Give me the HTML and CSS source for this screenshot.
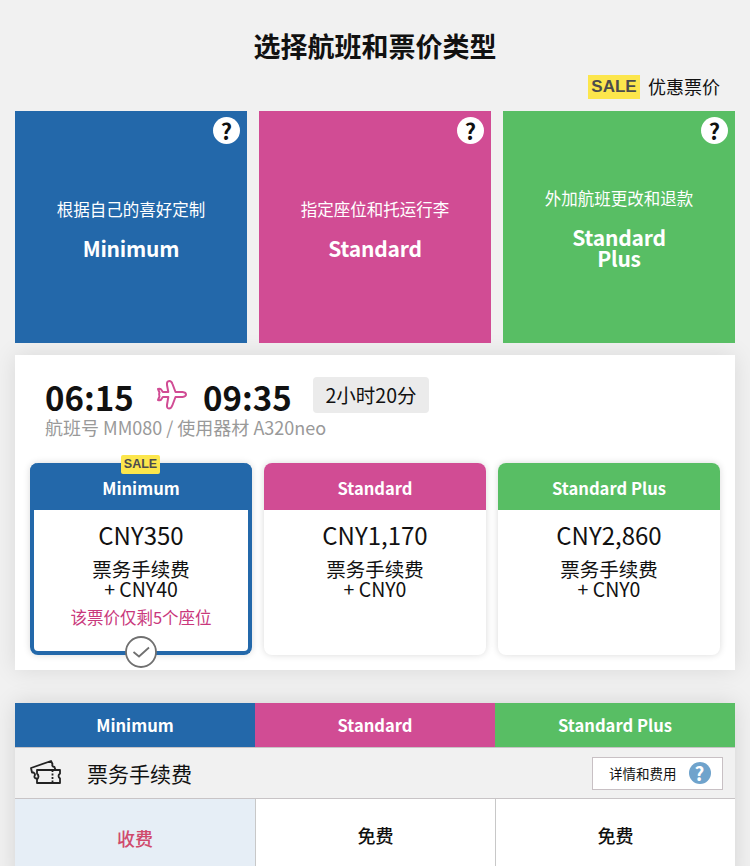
FILE: index.html
```
<!DOCTYPE html>
<html lang="zh-CN">
<head>
  <meta charset="UTF-8">
  <meta name="viewport" content="width=device-width, initial-scale=1.0">
  <title>选择航班和票价类型</title>
  <link rel="stylesheet" href="styles.css">
</head>
<body>
  <h1>选择航班和票价类型</h1>

  <div class="legend">
    <span class="sale">SALE</span>
    <span class="legend-text">优惠票价</span>
  </div>

  <!-- Fare types -->
  <div class="types">
    <div class="type minimum">
      <button class="help">?</button>
      <p>根据自己的喜好定制</p>
      <h2>Minimum</h2>
    </div>
    <div class="type standard">
      <button class="help">?</button>
      <p>指定座位和托运行李</p>
      <h2>Standard</h2>
    </div>
    <div class="type plus">
      <button class="help">?</button>
      <p>外加航班更改和退款</p>
      <h2>Standard<br>Plus</h2>
    </div>
  </div>

  <!-- Flight -->
  <div class="flight">
    <div class="times">
      <span class="time">06:15</span>
      <svg class="plane" width="32" height="32" viewBox="0 0 32 32">
        <path d="M2 10 Q4.500 9 5.500 11 L6.800 13 H12.300 L11 6 Q10.500 2 13.300 2 Q15.500 2 16.500 5 L19.500 13 H26.500 Q30 13.400 30 15.500 Q30 17.600 26.500 18 H19.500 L16.500 26 Q15.300 29.500 13 29.500 Q10.700 29.500 11 26 L12.300 18 H6.800 L5.500 20 Q4.500 22 2 21 L3.500 17.500 Q2.500 15.500 3.500 13.500 Z"/>
      </svg>
      <span class="time">09:35</span>
      <span class="duration">2小时20分</span>
    </div>
    <p class="info">航班号 MM080 / 使用器材 A320neo</p>

    <div class="fares">
      <div class="fare selected">
        <span class="sale small">SALE</span>
        <h3 class="minimum">Minimum</h3>
        <p class="price">CNY350</p>
        <p class="fee">票务手续费<br>+ CNY40</p>
        <p class="seats">该票价仅剩5个座位</p>
        <svg class="check" width="32" height="32" viewBox="0 0 32 32">
          <circle cx="16" cy="16" r="15"/>
          <path d="M8.500 16 L14 20.500 L24 11.500"/>
        </svg>
      </div>
      <div class="fare">
        <h3 class="standard">Standard</h3>
        <p class="price">CNY1,170</p>
        <p class="fee">票务手续费<br>+ CNY0</p>
      </div>
      <div class="fare">
        <h3 class="plus">Standard Plus</h3>
        <p class="price">CNY2,860</p>
        <p class="fee">票务手续费<br>+ CNY0</p>
      </div>
    </div>
  </div>

  <!-- Comparison table -->
  <div class="compare">
    <div class="row heads">
      <div class="minimum">Minimum</div>
      <div class="standard">Standard</div>
      <div class="plus">Standard Plus</div>
    </div>
    <div class="section">
      <svg class="ticket" width="32" height="26" viewBox="0 0 32 26">
        <path d="M7 10 H30 V13.500 Q27 16 30 18.500 V23 H7 V19.500 Q10 16.500 7 13.500 Z"/>
        <path d="M7 18.500 Q4 18.500 4.500 16 Q5.800 14 3.500 12.500 L2 12.500 L1 8 L21 1 L22.500 4 Q21.500 6.500 24.500 7 L25.500 10"/>
        <path class="dash" d="M22.500 10 V23"/>
      </svg>
      <span class="label">票务手续费</span>
      <button class="detail">详情和费用<span class="q">?</span></button>
    </div>
    <div class="row cells">
      <div class="paid">收费</div>
      <div>免费</div>
      <div>免费</div>
    </div>
  </div>
</body>
</html>
```

FILE: styles.css
```
* {
  box-sizing: border-box;
}

body {
  margin: 0;
  padding: 26px 15px 0;
  height: 866px;
  overflow: hidden;
  background-color: #f1f1f1;
  color: #111;
  font-family: "Noto Sans CJK SC", sans-serif;
}

h1, h2, h3, p {
  margin: 0;
}

button {
  font-family: inherit;
  color: #111;
  padding: 0;
}

h1 {
  font-size: 27px;
  line-height: 40px;
  text-align: center;
}

.minimum {
  background-color: #2368aa;
}

.standard {
  background-color: #d14c94;
}

.plus {
  background-color: #58be64;
}

.legend {
  display: flex;
  justify-content: flex-end;
  gap: 8px;
  height: 24px;
  margin: 9px 15px 12px 0;
  font-size: 18px;
}

.legend-text {
  line-height: 23px;
}

.sale {
  width: 52px;
  background-color: #fce64c;
  color: #4c4c4c;
  font: bold 17px/24px "Liberation Sans", Arial, sans-serif;
  text-align: center;
}

/* Fare types */
.types {
  display: grid;
  grid-template-columns: repeat(3, 1fr);
  gap: 12px;
}

.type {
  position: relative;
  display: flex;
  flex-direction: column;
  justify-content: center;
  height: 232px;
  padding-top: 1px;
  color: #fff;
  text-align: center;
}

.type p {
  font-size: 16.5px;
  line-height: 24px;
}

.type h2 {
  margin-top: 17px;
  font-size: 21px;
  line-height: 21px;
  letter-spacing: -0.2px;
}

.help {
  position: absolute;
  top: 6px;
  right: 7px;
  width: 27px;
  height: 27px;
  border: none;
  border-radius: 50%;
  background-color: #fff;
  font-size: 22px;
  font-weight: bold;
  line-height: 25px;
}

/* Flight */
.flight {
  height: 315px;
  margin-top: 12px;
  padding: 22px 15px 0;
  background-color: #fff;
  box-shadow: 0 0 22px rgba(0, 0, 0, 0.1);
}

.times {
  display: flex;
  height: 40px;
  padding-left: 15px;
}

.time {
  width: 88px;
  font-size: 33px;
  font-weight: bold;
  line-height: 41px;
  white-space: nowrap;
}

.plane {
  margin: 2px 15px 0 23px;
  fill: none;
  stroke: #d14c94;
  stroke-width: 2;
  stroke-linejoin: round;
}

.duration {
  width: 116px;
  height: 36px;
  margin-left: 22px;
  border-radius: 4px;
  background-color: #ebebeb;
  font-size: 19.5px;
  line-height: 36px;
  text-align: center;
}

.info {
  padding-left: 15px;
  font-size: 18px;
  line-height: 20px;
  color: #999;
}

.fares {
  display: grid;
  grid-template-columns: repeat(3, 1fr);
  gap: 12px;
  margin-top: 26px;
}

.fare {
  position: relative;
  height: 192px;
  border-radius: 8px;
  box-shadow: 0 0 7px rgba(0, 0, 0, 0.15);
  text-align: center;
}

.fare h3 {
  height: 47px;
  border-radius: 8px 8px 0 0;
  color: #fff;
  font-size: 16.6px;
  line-height: 50px;
}

.selected {
  border: 4px solid #2368aa;
  border-top: none;
}

.selected h3 {
  margin: 0 -4px;
}

.price {
  margin-top: 8px;
  font-size: 24px;
  line-height: 34px;
}

.fee {
  margin-top: 7px;
  font-size: 19.5px;
  line-height: 20px;
}

.seats {
  margin-top: 6px;
  color: #c9387c;
  font-size: 16.5px;
  line-height: 24px;
}

.small {
  position: absolute;
  top: -8px;
  left: 50%;
  width: 39px;
  margin-left: -20px;
  border-radius: 2px;
  font-size: 12.5px;
  line-height: 19px;
}

.check {
  position: absolute;
  bottom: -17px;
  left: 50%;
  margin-left: -16px;
  fill: #fff;
  stroke: #707070;
  stroke-width: 1.8;
}

/* Comparison table */
.compare {
  height: 180px;
  margin-top: 33px;
  background-color: #fff;
  box-shadow: 0 0 22px rgba(0, 0, 0, 0.12);
}

.row {
  display: grid;
  grid-template-columns: repeat(3, 1fr);
  text-align: center;
}

.heads {
  height: 44px;
  color: #fff;
  font-size: 16.6px;
  font-weight: bold;
  line-height: 44px;
}

.section {
  display: flex;
  align-items: center;
  height: 52px;
  padding: 0 12px 0 15px;
  border-top: 1px solid #c8c4c6;
  border-bottom: 1px solid #c8c4c6;
  background-color: #f1f1f1;
}

.ticket {
  fill: none;
  stroke: #222;
  stroke-width: 1.8;
  stroke-linejoin: round;
}

.dash {
  stroke-dasharray: 2 1.5;
}

.label {
  margin-left: 25px;
  font-size: 21px;
}

.detail {
  display: flex;
  align-items: center;
  width: 131px;
  height: 33px;
  margin-left: auto;
  padding-left: 16px;
  border: 1px solid #c8c0c4;
  background-color: #fff;
  font-size: 13.5px;
}

.q {
  width: 22px;
  height: 22px;
  margin-left: 12px;
  border-radius: 50%;
  background-color: #6fa3cc;
  color: #fff;
  font-size: 19px;
  font-weight: bold;
  line-height: 21px;
  text-align: center;
}

.cells div {
  height: 84px;
  font-size: 18px;
  font-weight: 500;
  line-height: 72px;
}

.cells div + div {
  border-left: 1px solid #c8c8c8;
}

.cells .paid {
  background-color: #e6eef6;
  color: #d04a6c;
  line-height: 79px;
}
```
